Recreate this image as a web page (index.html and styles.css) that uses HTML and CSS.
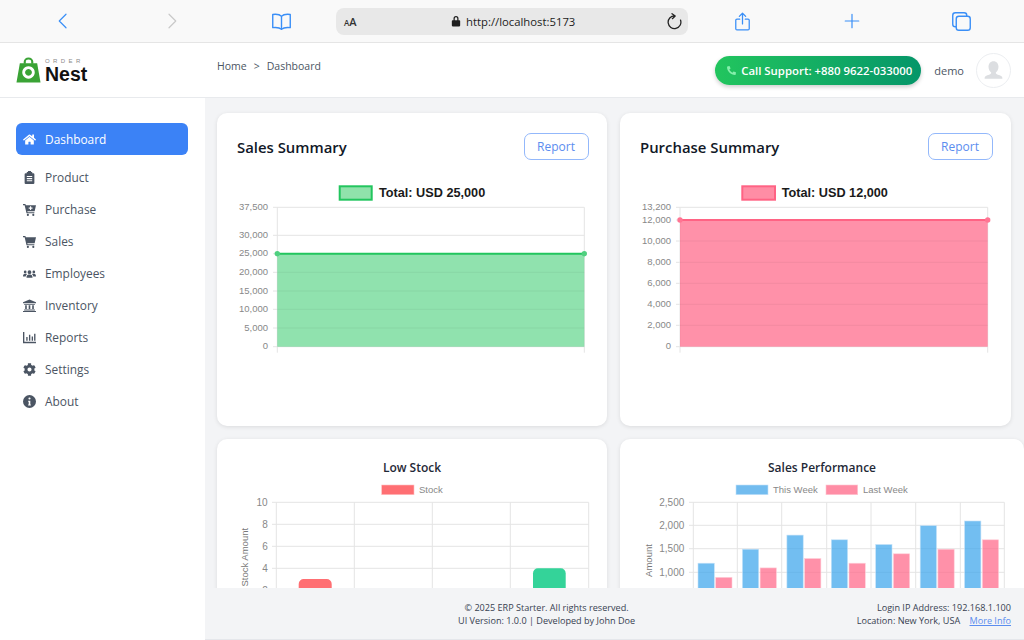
FILE: index.html
```html
<!DOCTYPE html>
<html lang="en">

<head>
    <meta charset="UTF-8">
    <meta name="viewport" content="width=device-width, initial-scale=1.0">
    <title>Order Nest - Dashboard</title>
    <link rel="stylesheet" href="styles.css">
</head>

<body>
    <!-- Browser toolbar -->
    <div class="toolbar">
        <span class="tool-slot">
            <svg class="tool-icon" viewBox="0 0 24 24"><path d="M16 3 L7 12 L16 21" /></svg>
        </span>
        <span class="tool-slot">
            <svg class="tool-icon tool-icon-off" viewBox="0 0 24 24"><path d="M8 3 L17 12 L8 21" /></svg>
        </span>
        <span class="tool-slot">
            <svg class="tool-icon tool-icon-wide" viewBox="0 0 24 24"><path d="M12 6 C10 4 6 3.5 2 4 V19 C6 18.5 10 19 12 21 C14 19 18 18.5 22 19 V4 C18 3.5 14 4 12 6 Z M12 6 V21" /></svg>
        </span>
        <div class="address-bar">
            <span class="address-aa"><small>A</small>A</span>
            <span class="address-url">
                <svg class="lock-icon" viewBox="0 0 12 14"><path d="M3 6 V4 a3 3 0 0 1 6 0 V6 h1 a1 1 0 0 1 1 1 v5.5 a1 1 0 0 1 -1 1 H2 a1 1 0 0 1 -1 -1 V7 a1 1 0 0 1 1 -1 Z M4.5 6 h3 V4 a1.5 1.5 0 0 0 -3 0 Z" /></svg>
                http://localhost:5173
            </span>
            <svg class="reload-icon" viewBox="0 0 24 24"><path d="M12 4 A9 9 0 1 0 20.5 10 M8.5 1 L13 4.2 L9 8" /></svg>
        </div>
        <span class="tool-slot">
            <svg class="tool-icon tool-icon-tall" viewBox="0 0 24 24"><path d="M12 15 V2 M8 5.5 L12 1.5 L16 5.5 M8.5 9 H5 a1.5 1.5 0 0 0 -1.5 1.5 V21 a1.5 1.5 0 0 0 1.5 1.5 H19 a1.5 1.5 0 0 0 1.5 -1.5 V10.5 a1.5 1.5 0 0 0 -1.5 -1.5 H15.5" /></svg>
        </span>
        <span class="tool-slot">
            <svg class="tool-icon" viewBox="0 0 24 24"><path d="M12 3 V21 M3 12 H21" /></svg>
        </span>
        <span class="tool-slot">
            <svg class="tool-icon tool-icon-wide" viewBox="0 0 24 24"><path d="M6 18 H5 a3 3 0 0 1 -3 -3 V5 a3 3 0 0 1 3 -3 H15 a3 3 0 0 1 3 3 V6 M9 6 H19 a3 3 0 0 1 3 3 V19 a3 3 0 0 1 -3 3 H9 a3 3 0 0 1 -3 -3 V9 a3 3 0 0 1 3 -3 Z" /></svg>
        </span>
    </div>

    <!-- App header -->
    <header class="app-header">
        <div class="logo">
            <svg class="logo-bag" viewBox="0 0 26 27">
                <path d="M8 7 V5 a5 4.5 0 0 1 10 0 V7 H15.8 V5 a2.8 2.5 0 0 0 -5.6 0 V7 Z" fill="#3aa335" />
                <path fill-rule="evenodd" d="M4 6.5 H22 L25.5 26.5 H0.5 Z M13 9.5 a6.5 6.5 0 1 0 0.01 0 Z M13 12.5 a3.5 3.5 0 1 1 -0.01 0 Z" fill="#3aa335" />
            </svg>
            <div class="logo-words">
                <span class="logo-order">ORDER</span>
                <span class="logo-nest">Nest</span>
            </div>
        </div>
        <nav class="breadcrumb">
            <span>Home</span>
            <span>&gt;</span>
            <span>Dashboard</span>
        </nav>
        <div class="header-right">
            <div class="support-pill">
                <svg class="support-icon" viewBox="0 0 512 512"><path d="M493 24 L389 0 c-11 -3 -23 3 -27 14 l-48 112 c-4 10 -1 21 7 28 l60 50 c-36 77 -99 140 -176 176 l-50 -60 c-7 -8 -18 -11 -28 -7 l-112 48 c-11 5 -17 16 -14 28 l24 104 c2 11 12 19 23 19 c256 0 464 -207 464 -464 c0 -11 -8 -21 -19 -24 Z" transform="translate(512 0) scale(-1 1)" /></svg>
                Call Support: +880 9622-033000
            </div>
            <span class="user-name">demo</span>
            <div class="avatar">
                <svg viewBox="0 0 24 24"><path d="M12 3 c3 0 4.8 2.3 4.8 5.5 c0 2.5 -1.2 4.5 -2.6 5.5 c0 1 0.5 1.6 2 2 c2.5 0.7 4.3 1.5 4.3 3 v1 H3.5 v-1 c0 -1.5 1.8 -2.3 4.3 -3 c1.5 -0.4 2 -1 2 -2 c-1.4 -1 -2.6 -3 -2.6 -5.5 C7.2 5.3 9 3 12 3 Z" /></svg>
            </div>
        </div>
    </header>

    <div class="app-body">
        <aside class="sidebar">
            <a class="nav-item nav-item-active">
                <svg class="nav-icon" viewBox="0 0 576 512"><path d="M280.37 148.26L96 300.11V464a16 16 0 0 0 16 16l112.06-.29a16 16 0 0 0 15.92-16V368a16 16 0 0 1 16-16h64a16 16 0 0 1 16 16v95.64a16 16 0 0 0 16 16.05L464 480a16 16 0 0 0 16-16V300L295.67 148.26a12.19 12.19 0 0 0-15.3 0zM571.6 251.47L488 182.56V44.05a12 12 0 0 0-12-12h-56a12 12 0 0 0-12 12v72.61L318.47 43a48 48 0 0 0-61 0L4.34 251.47a12 12 0 0 0-1.6 16.9l25.5 31A12 12 0 0 0 45.15 301l235.22-193.74a12.19 12.19 0 0 1 15.3 0L530.9 301a12 12 0 0 0 16.9-1.6l25.5-31a12 12 0 0 0-1.7-16.93z" /></svg>
                Dashboard
            </a>
            <a class="nav-item">
                <svg class="nav-icon" viewBox="0 0 24 24"><path fill-rule="evenodd" d="M9 2 a3 3 0 0 1 6 0 h2 v2 h2 a2 2 0 0 1 2 2 v16 a2 2 0 0 1 -2 2 H5 a2 2 0 0 1 -2 -2 V6 a2 2 0 0 1 2 -2 h2 V2 Z M7 9 v2 h10 V9 Z M7 13 v2 h10 v-2 Z M7 17 v2 h10 v-2 Z" /></svg>
                Product
            </a>
            <a class="nav-item">
                <svg class="nav-icon" viewBox="0 0 24 24"><path fill-rule="evenodd" d="M0 2 h4.5 L5 4 H24 l-2.5 11 H8 l0.4 2 H21 v2 H6.5 L3 4 H0 Z M13 6 v2.5 h-2.5 v2 H13 V13 h2 v-2.5 h2.5 v-2 H15 V6 Z M9 20 a2 2 0 1 1 0 4 a2 2 0 0 1 0 -4 Z M19 20 a2 2 0 1 1 0 4 a2 2 0 0 1 0 -4 Z" /></svg>
                Purchase
            </a>
            <a class="nav-item">
                <svg class="nav-icon" viewBox="0 0 24 24"><path d="M0 2 h4.5 L5 4 H24 l-2.5 11 H8 l0.4 2 H21 v2 H6.5 L3 4 H0 Z M9 20 a2 2 0 1 1 0 4 a2 2 0 0 1 0 -4 Z M19 20 a2 2 0 1 1 0 4 a2 2 0 0 1 0 -4 Z" /></svg>
                Sales
            </a>
            <a class="nav-item">
                <svg class="nav-icon" viewBox="0 0 24 24"><path d="M12 6 a3.5 3.5 0 1 1 0 7 a3.5 3.5 0 0 1 0 -7 Z M4 6.5 a2.5 2.5 0 1 1 0 5 a2.5 2.5 0 0 1 0 -5 Z M20 6.5 a2.5 2.5 0 1 1 0 5 a2.5 2.5 0 0 1 0 -5 Z M6.5 19 c0 -3 2 -5 4 -5 h3 c2 0 4 2 4 5 v1 h-11 Z M0 17 c0 -2.5 1.5 -4.5 3 -4.5 h3 c0.5 0 1 0.3 1.3 0.7 C6 14.5 5 16 5 17.5 H0 Z M24 17 c0 -2.5 -1.5 -4.5 -3 -4.5 h-3 c-0.5 0 -1 0.3 -1.3 0.7 C18 14.5 19 16 19 17.5 H24 Z" /></svg>
                Employees
            </a>
            <a class="nav-item">
                <svg class="nav-icon" viewBox="0 0 24 24"><path d="M12 1 L24 6 V8 H0 V6 Z M2 9 H22 V10.5 H2 Z M4 11.5 H7 V18.5 H4 Z M10.5 11.5 H13.5 V18.5 H10.5 Z M17 11.5 H20 V18.5 H17 Z M2 19.5 H22 V21 H2 Z M0 22 H24 V24 H0 Z" /></svg>
                Inventory
            </a>
            <a class="nav-item">
                <svg class="nav-icon" viewBox="0 0 24 24"><path d="M0 2 H2.5 V20 H24 V22.5 H0 Z M6 11 H8.5 V18 H6 Z M11 7 H13.5 V18 H11 Z M16 10 H18.5 V18 H16 Z M20.5 5 H23 V18 H20.5 Z" /></svg>
                Reports
            </a>
            <a class="nav-item">
                <svg class="nav-icon" viewBox="0 0 512 512"><path d="M487.4 315.7l-42.6-24.6c4.3-23.2 4.3-47 0-70.2l42.6-24.6c4.9-2.8 7.1-8.6 5.5-14-11.1-35.6-30-67.8-54.7-94.6-3.8-4.1-10-5.1-14.8-2.3L380.8 110c-17.9-15.4-38.5-27.3-60.8-35.1V25.8c0-5.6-3.9-10.5-9.4-11.7-36.7-8.2-74.3-7.8-109.2 0-5.5 1.2-9.4 6.1-9.4 11.7V75c-22.2 7.9-42.8 19.8-60.8 35.1L88.7 85.5c-4.9-2.8-11-1.9-14.8 2.3-24.7 26.7-43.6 58.9-54.7 94.6-1.7 5.4.6 11.2 5.5 14L67.3 221c-4.3 23.2-4.3 47 0 70.2l-42.6 24.6c-4.9 2.8-7.1 8.6-5.5 14 11.1 35.6 30 67.8 54.7 94.6 3.8 4.1 10 5.1 14.8 2.3l42.6-24.6c17.9 15.4 38.5 27.3 60.8 35.1v49.2c0 5.6 3.9 10.5 9.4 11.7 36.7 8.2 74.3 7.8 109.2 0 5.5-1.2 9.4-6.1 9.4-11.7v-49.2c22.2-7.9 42.8-19.8 60.8-35.1l42.6 24.6c4.9 2.8 11 1.9 14.8-2.3 24.7-26.7 43.6-58.9 54.7-94.6 1.5-5.5-.7-11.3-5.6-14.1zM256 336c-44.1 0-80-35.9-80-80s35.9-80 80-80 80 35.9 80 80-35.9 80-80 80z" /></svg>
                Settings
            </a>
            <a class="nav-item">
                <svg class="nav-icon" viewBox="0 0 24 24"><path fill-rule="evenodd" d="M12 0 a12 12 0 1 1 0 24 a12 12 0 0 1 0 -24 Z M12 4.5 a2 2 0 1 0 0 4 a2 2 0 0 0 0 -4 Z M9.5 10.5 v2 h1 v5 h-1 v2 h5 v-2 h-1 v-7 Z" /></svg>
                About
            </a>
        </aside>

        <div class="content-column">
            <main class="content">
                <div class="card-row">
                    <section class="card card-summary">
                        <div class="card-head">
                            <h2 class="card-title">Sales Summary</h2>
                            <button class="report-btn">Report</button>
                        </div>
                        <svg class="chart chart-summary" viewBox="0 0 390 170">
                            <rect x="122.7" y="3.3" width="32" height="13.4" fill="#90e2ab" stroke="#22c55e" stroke-width="2" />
                            <text class="legend-strong" x="162" y="13.7">Total: USD 25,000</text>
                            <path class="grid" d="M56 24.3 H367.3 M56 52.3 H367.3 M56 70.7 H60 M56 89.3 H60 M56 108 H60 M56 126.3 H60 M56 145 H60 M56 163.7 H367.3 M60.3 24.3 V169.7 M367.3 24.3 V169.7" />
                            <rect x="60.3" y="70.7" width="307" height="93" fill="#22c55e" fill-opacity="0.5" />
                            <path class="grid-over" d="M60.3 89.3 H367.3 M60.3 108 H367.3 M60.3 126.3 H367.3 M60.3 145 H367.3" />
                            <path d="M60.3 70.7 H367.3" stroke="#22c55e" stroke-width="2" />
                            <circle cx="60.3" cy="70.7" r="2.7" fill="#4fd07f" />
                            <circle cx="367.3" cy="70.7" r="2.7" fill="#4fd07f" />
                            <text class="tick" x="51" y="26.8">37,500</text>
                            <text class="tick" x="51" y="54.8">30,000</text>
                            <text class="tick" x="51" y="73.2">25,000</text>
                            <text class="tick" x="51" y="91.8">20,000</text>
                            <text class="tick" x="51" y="110.5">15,000</text>
                            <text class="tick" x="51" y="128.8">10,000</text>
                            <text class="tick" x="51" y="147.5">5,000</text>
                            <text class="tick" x="51" y="166.2">0</text>
                        </svg>
                    </section>
                    <section class="card card-summary">
                        <div class="card-head">
                            <h2 class="card-title">Purchase Summary</h2>
                            <button class="report-btn">Report</button>
                        </div>
                        <svg class="chart chart-summary" viewBox="0 0 390 170">
                            <rect x="122.3" y="3.3" width="32.7" height="13.4" fill="#ff8da5" stroke="#ff6384" stroke-width="2" />
                            <text class="legend-strong" x="161.7" y="13.7">Total: USD 12,000</text>
                            <path class="grid" d="M56 24.3 H367.7 M56 37 H60 M56 58 H60 M56 79.3 H60 M56 100.3 H60 M56 121.3 H60 M56 142.3 H60 M56 163.7 H367.7 M60 24.3 V169.7 M367.7 24.3 V169.7" />
                            <rect x="60" y="37" width="307.7" height="126.7" fill="#ff6384" fill-opacity="0.7" />
                            <path class="grid-over" d="M60 58 H367.7 M60 79.3 H367.7 M60 100.3 H367.7 M60 121.3 H367.7 M60 142.3 H367.7" />
                            <path d="M60 37 H367.7" stroke="#ff6384" stroke-width="2" />
                            <circle cx="60" cy="37" r="2.7" fill="#ff7593" />
                            <circle cx="367.7" cy="37" r="2.7" fill="#ff7593" />
                            <text class="tick" x="51" y="26.8">13,200</text>
                            <text class="tick" x="51" y="39.5">12,000</text>
                            <text class="tick" x="51" y="60.5">10,000</text>
                            <text class="tick" x="51" y="81.8">8,000</text>
                            <text class="tick" x="51" y="102.8">6,000</text>
                            <text class="tick" x="51" y="123.8">4,000</text>
                            <text class="tick" x="51" y="144.8">2,000</text>
                            <text class="tick" x="51" y="166.2">0</text>
                        </svg>
                    </section>
                </div>

                <div class="card-row card-row-lower">
                    <section class="card card-chart">
                        <h3 class="chart-title">Low Stock</h3>
                        <svg class="chart chart-lower" viewBox="0 0 390 130">
                            <rect x="164.7" y="5" width="32.3" height="9.7" fill="#ff6f73" stroke="#ffc0c2" stroke-width="0.6" />
                            <text class="legend" x="202" y="13">Stock</text>
                            <path class="grid" d="M55 22.3 H371.7 M55 44.3 H371.7 M55 66.3 H371.7 M55 88.3 H371.7 M55 110.3 H371.7 M59.3 22.3 V130 M137.3 22.3 V130 M215.3 22.3 V130 M293.3 22.3 V130 M371.7 22.3 V130" />
                            <path d="M81.7 130 V104 a5 5 0 0 1 5 -5 H109.7 a5 5 0 0 1 5 5 V130 Z" fill="#ff6f73" />
                            <path d="M316 130 V93.3 a5 5 0 0 1 5 -5 H343.7 a5 5 0 0 1 5 5 V130 Z" fill="#34d399" />
                            <text class="tick tick-lg" x="50.7" y="25.8">10</text>
                            <text class="tick tick-lg" x="50.7" y="47.8">8</text>
                            <text class="tick tick-lg" x="50.7" y="69.8">6</text>
                            <text class="tick tick-lg" x="50.7" y="91.8">4</text>
                            <text class="tick tick-lg" x="50.7" y="113.8">2</text>
                            <text class="axis-title" transform="translate(31 77.2) rotate(-90)">Stock Amount</text>
                        </svg>
                    </section>
                    <section class="card card-chart">
                        <h3 class="chart-title">Sales Performance</h3>
                        <svg class="chart chart-lower" viewBox="0 0 404 130">
                            <rect x="116" y="5" width="32" height="9.7" fill="#72bcef" stroke="#c4e2f8" stroke-width="0.6" />
                            <text class="legend" x="153" y="13">This Week</text>
                            <rect x="206" y="5" width="31.7" height="9.7" fill="#ff8da5" stroke="#ffc6d2" stroke-width="0.6" />
                            <text class="legend" x="243" y="13">Last Week</text>
                            <path class="grid" d="M69 22.3 H384.3 M69 45.3 H384.3 M69 68.7 H384.3 M69 92.3 H384.3 M73.3 22.3 V130 M117.3 22.3 V130 M161.7 22.3 V130 M206.7 22.3 V130 M251 22.3 V130 M295.7 22.3 V130 M340.3 22.3 V130 M384.3 22.3 V130" />
                            <g class="bars-blue">
                                <rect x="78" y="83.2" width="16.3" height="50" />
                                <rect x="122.4" y="69.2" width="16.3" height="64" />
                                <rect x="166.9" y="55.1" width="16.3" height="78" />
                                <rect x="211.3" y="59.8" width="16.3" height="74" />
                                <rect x="255.7" y="64.5" width="16.3" height="69" />
                                <rect x="300.2" y="45.7" width="16.3" height="88" />
                                <rect x="344.6" y="41" width="16.3" height="92" />
                            </g>
                            <g class="bars-pink">
                                <rect x="95.7" y="97.3" width="16.3" height="36" />
                                <rect x="140.1" y="87.9" width="16.3" height="46" />
                                <rect x="184.6" y="78.5" width="16.3" height="55" />
                                <rect x="229" y="83.2" width="16.3" height="50" />
                                <rect x="273.4" y="73.8" width="16.3" height="60" />
                                <rect x="317.9" y="69.2" width="16.3" height="64" />
                                <rect x="362.3" y="59.8" width="16.3" height="74" />
                            </g>
                            <text class="tick tick-lg" x="64.3" y="25.8">2,500</text>
                            <text class="tick tick-lg" x="64.3" y="48.8">2,000</text>
                            <text class="tick tick-lg" x="64.3" y="72.2">1,500</text>
                            <text class="tick tick-lg" x="64.3" y="95.8">1,000</text>
                            <text class="axis-title" transform="translate(31.5 80.5) rotate(-90)">Amount</text>
                        </svg>
                    </section>
                </div>
            </main>

            <footer class="app-footer">
                <div class="footer-center">
                    <p>&copy; 2025 ERP Starter. All rights reserved.</p>
                    <p>UI Version: 1.0.0 | Developed by John Doe</p>
                </div>
                <div class="footer-right">
                    <p>Login IP Address: 192.168.1.100</p>
                    <p>Location: New York, USA <a class="more-info">More Info</a></p>
                </div>
            </footer>
        </div>
    </div>
</body>

</html>
```

FILE: styles.css
```css
body {
    font-family: "Open Sans", "Noto Sans", sans-serif;
    margin: 0;
    padding: 0;
    height: 640px;
    overflow: hidden;
    display: flex;
    flex-direction: column;
    background-color: #fff;
    color: #4b5563;
}

/* Browser toolbar */
.toolbar {
    display: flex;
    align-items: center;
    flex: none;
    height: 42px;
    padding-left: 8px;
    background-color: #f9f9f9;
    border-bottom: 1px solid #e5e5e5;
}

.tool-slot {
    display: flex;
    align-items: center;
    justify-content: center;
    width: 109.3px;
}

.tool-icon {
    width: 18px;
    height: 18px;
    fill: none;
    stroke: #3a8ff7;
    stroke-width: 1.6;
    stroke-linecap: round;
    stroke-linejoin: round;
}

.tool-icon-off {
    stroke: #c9c9c9;
}

.tool-icon-wide {
    width: 21px;
    height: 21px;
}

.tool-icon-tall {
    width: 19px;
    height: 25px;
}

.address-bar {
    display: flex;
    align-items: center;
    justify-content: space-between;
    box-sizing: border-box;
    width: 352px;
    height: 27px;
    padding: 0 5px 0 8px;
    border-radius: 8px;
    background-color: #e8e8e8;
    color: #222;
}

.address-aa {
    font-size: 11px;
    font-weight: 600;
    color: #333;
}

.address-aa small {
    font-size: 8px;
}

.address-url {
    display: flex;
    align-items: center;
    gap: 5px;
    margin-left: 4px;
    font-size: 11.3px;
}

.lock-icon {
    width: 10px;
    height: 12px;
    fill: #1f1f1f;
}

.reload-icon {
    width: 17px;
    height: 17px;
    fill: none;
    stroke: #222;
    stroke-width: 1.8;
    stroke-linecap: round;
    stroke-linejoin: round;
}

/* App header */
.app-header {
    display: flex;
    flex: none;
    height: 54px;
    padding-right: 13px;
    border-bottom: 1px solid #e8eaed;
}

.logo {
    display: flex;
    align-items: center;
    gap: 4px;
    box-sizing: border-box;
    width: 217px;
    padding-left: 16px;
}

.logo-bag {
    width: 25px;
    height: 26px;
}

.logo-words {
    display: flex;
    flex-direction: column;
    font-family: "Liberation Sans", sans-serif;
}

.logo-order {
    font-size: 6px;
    line-height: 7px;
    letter-spacing: 3.4px;
    color: #8a8a8a;
}

.logo-nest {
    font-size: 19.5px;
    line-height: 18px;
    font-weight: 700;
    color: #111;
}

.breadcrumb {
    display: flex;
    gap: 7px;
    padding-top: 16px;
    font-size: 10.5px;
    line-height: 15px;
}

.header-right {
    display: flex;
    align-items: center;
    margin-left: auto;
}

.support-pill {
    display: flex;
    align-items: center;
    gap: 5px;
    height: 29px;
    padding: 0 9px 0 12px;
    border-radius: 15px;
    background: linear-gradient(90deg, #22c55e, #059669);
    box-shadow: 0 2px 4px rgba(0, 0, 0, 0.2);
    color: #fff;
    font-size: 11.4px;
    font-weight: 600;
}

.support-icon {
    width: 9px;
    height: 9px;
    fill: #86efac;
}

.user-name {
    margin: 0 12px 0 13px;
    font-size: 11px;
}

.avatar {
    display: flex;
    align-items: center;
    justify-content: center;
    box-sizing: border-box;
    width: 35px;
    height: 35px;
    border: 1px solid #eceef1;
    border-radius: 50%;
}

.avatar svg {
    width: 25px;
    height: 25px;
    fill: #dcdee1;
}

/* Layout below the header */
.app-body {
    display: flex;
    flex: 1;
    min-height: 0;
}

.sidebar {
    flex: none;
    box-sizing: border-box;
    width: 205px;
    padding: 25px 17px 0 16px;
}

.nav-item {
    display: flex;
    align-items: center;
    gap: 9px;
    height: 32px;
    padding-left: 7px;
    font-size: 11.9px;
    color: #4b5563;
}

.nav-item-active {
    margin-bottom: 6px;
    border-radius: 6px;
    background-color: #3b82f6;
    color: #fff;
}

.nav-icon {
    flex: none;
    width: 13px;
    height: 13px;
    fill: currentColor;
}

.content-column {
    display: flex;
    flex: 1;
    flex-direction: column;
    min-width: 0;
    background-color: #f3f4f6;
}

.content {
    flex: 1;
    min-height: 0;
    overflow: hidden;
    padding: 15px 13px 0 12px;
}

.card-row {
    display: grid;
    grid-template-columns: 390px 391px;
    gap: 13px;
    margin-bottom: 13px;
}

.card-row-lower {
    grid-template-columns: 390px 404px;
}

.card {
    border-radius: 10px;
    background-color: #fff;
    box-shadow: 0 1px 4px rgba(0, 0, 0, 0.1);
}

.card-summary {
    height: 313px;
    box-sizing: border-box;
    padding-top: 20px;
}

.card-chart {
    height: 313px;
}

.card-head {
    display: flex;
    align-items: center;
    justify-content: space-between;
    height: 27px;
    padding: 0 18.5px 0 20px;
    margin-bottom: 23px;
}

.card-title {
    margin: 0;
    padding-top: 1px;
    font-size: 14.9px;
    font-weight: 600;
    color: #111827;
}

.report-btn {
    box-sizing: border-box;
    width: 65px;
    height: 27px;
    padding: 0;
    border: 1px solid #93b8fb;
    border-radius: 7px;
    background-color: #fff;
    color: #5b8def;
    font-family: inherit;
    font-size: 12px;
}

.chart {
    display: block;
}

.chart-summary {
    width: 390px;
    height: 170px;
}

.chart-title {
    margin: 0;
    height: 41px;
    box-sizing: border-box;
    padding-top: 20px;
    font-size: 12px;
    line-height: 17px;
    font-weight: 600;
    text-align: center;
    color: #1f2937;
}

.chart-lower {
    width: 100%;
    height: 130px;
}

/* Chart parts */
.grid {
    fill: none;
    stroke: #e4e4e4;
    stroke-width: 1;
}

.grid-over {
    fill: none;
    stroke: rgba(0, 0, 0, 0.05);
    stroke-width: 1;
}

.tick {
    font-family: "Liberation Sans", sans-serif;
    font-size: 9.5px;
    text-anchor: end;
    fill: #888;
}

.tick-lg {
    font-size: 10px;
}

.legend-strong {
    font-family: "Liberation Sans", sans-serif;
    font-size: 12.7px;
    font-weight: 700;
    fill: #1a1a1a;
}

.legend {
    font-family: "Liberation Sans", sans-serif;
    font-size: 9.5px;
    fill: #888;
}

.axis-title {
    font-family: "Liberation Sans", sans-serif;
    font-size: 9.5px;
    text-anchor: middle;
    fill: #777;
}

.bars-blue rect {
    fill: rgba(54, 162, 235, 0.7);
    stroke: #c4e2f8;
    stroke-width: 0.6;
}

.bars-pink rect {
    fill: rgba(255, 99, 132, 0.7);
    stroke: #ffd0da;
    stroke-width: 0.6;
}

/* Footer */
.app-footer {
    display: flex;
    flex: none;
    align-items: center;
    box-sizing: border-box;
    height: 52px;
    padding: 0 13px 0 253px;
    border-bottom: 1px solid #e5e7eb;
    background-color: #f3f4f6;
    font-size: 9.1px;
    line-height: 13px;
    color: #374151;
}

.app-footer p {
    margin: 0;
}

.footer-center {
    text-align: center;
}

.footer-right {
    margin-left: auto;
    text-align: right;
}

.more-info {
    margin-left: 7px;
    color: #5b8def;
    text-decoration: underline;
}
```
